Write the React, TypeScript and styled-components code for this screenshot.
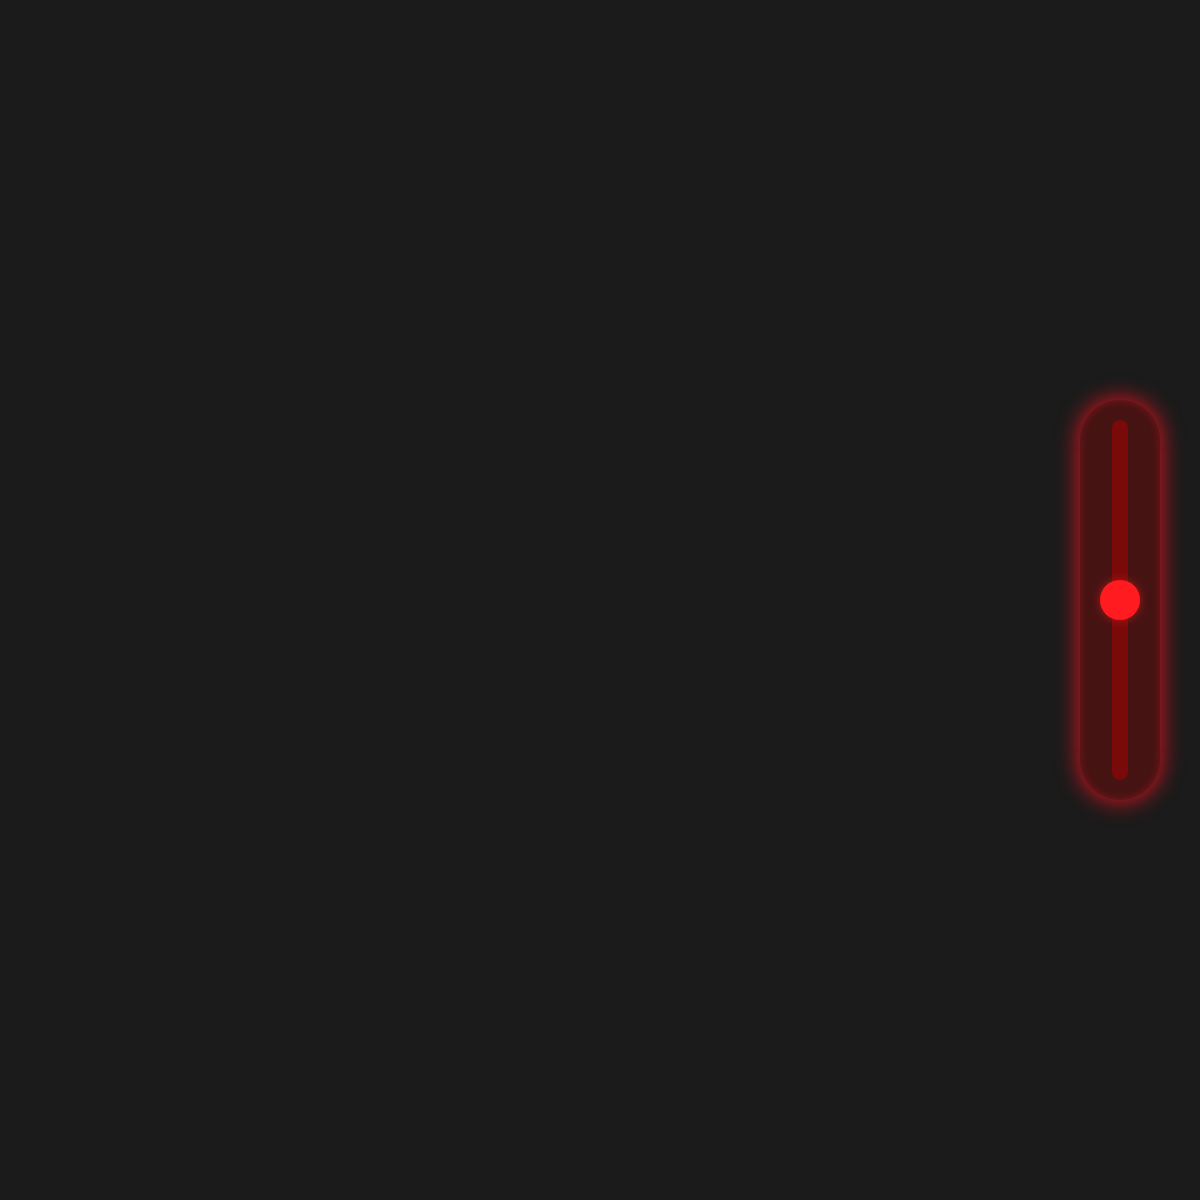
import React from 'react'
import styled, { createGlobalStyle } from 'styled-components'

const GlobalStyle = createGlobalStyle`
  html, body {
    margin: 0;
    padding: 0;
    background: #1b1b1b;
    font-family: 'Liberation Sans', Arial, sans-serif;
  }
`

const Page = styled.div`
  height: 1200px;
  display: flex;
  align-items: center;
  justify-content: flex-end;
  padding-right: 40px;
  box-sizing: border-box;
`

const Track = styled.div`
  position: relative;
  width: 80px;
  height: 400px;
  box-sizing: border-box;
  padding: 20px 0;
  display: flex;
  justify-content: center;
  border-radius: 40px;
  background: #461313;
  box-shadow:
    0 0 20px 4px rgba(225, 20, 32, 0.75),
    inset 0 0 8px rgba(230, 30, 40, 0.35);
`

const Rail = styled.div`
  width: 16px;
  height: 100%;
  border-radius: 8px;
  background: #7a0a0a;
`

const Knob = styled.div`
  position: absolute;
  left: 50%;
  width: 40px;
  height: 40px;
  margin: -20px 0 0 -20px;
  border-radius: 50%;
  background: #ff1b1f;
  box-shadow: 0 0 10px rgba(255, 30, 30, 0.55);
`

export default function App() {
  const value = 0.5
  return (
    <>
      <GlobalStyle />
      <Page>
        <Track>
          <Rail />
          <Knob style={{ top: `${20 + 360 * value}px` }} />
        </Track>
      </Page>
    </>
  )
}
